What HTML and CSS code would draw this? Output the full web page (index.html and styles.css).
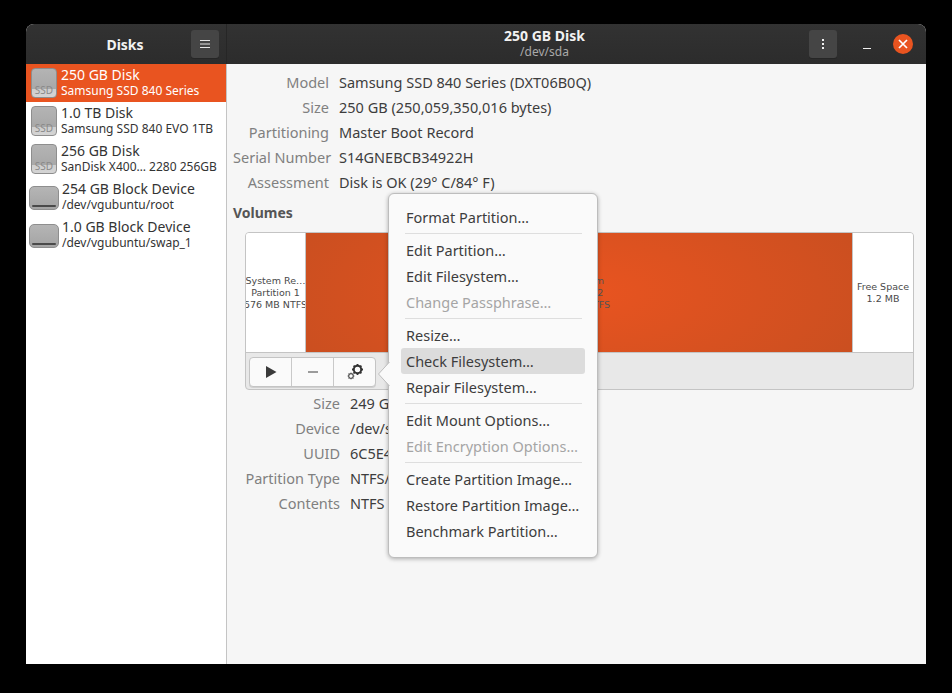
FILE: index.html
```html
<!DOCTYPE html>
<html lang="en">
<head>
<meta charset="utf-8">
<title>Disks</title>
<link rel="stylesheet" href="styles.css">
</head>
<body>
<div class="window">
  <header class="titlebar">
    <div class="title-left">
      <span class="app-title">Disks</span>
      <button class="hb-btn hamburger" aria-label="Menu">
        <svg width="12" height="12" viewBox="0 0 12 12"><path d="M1 2.5h10M1 6h10M1 9.5h10" stroke="#e6e6e6" stroke-width="1" fill="none"/></svg>
      </button>
    </div>
    <div class="title-right">
      <div class="title-center">
        <div class="title-main">250 GB Disk</div>
        <div class="title-sub">/dev/sda</div>
      </div>
      <button class="hb-btn dots" aria-label="Drive options">
        <svg width="4" height="12" viewBox="0 0 4 12"><path d="M1 1h2v2H1zM1 5h2v2H1zM1 9h2v2H1z" fill="#f0f0f0"/></svg>
      </button>
      <span class="minimize"></span>
      <span class="close">
        <svg width="10" height="10" viewBox="0 0 10 10"><path d="M1 1l8 8M9 1l-8 8" stroke="#fff" stroke-width="1.7" fill="none"/></svg>
      </span>
    </div>
  </header>
  <div class="content">
    <aside class="sidebar">
      <div class="drive selected">
        <div class="ssd-icon"><span>SSD</span></div>
        <div class="drive-text"><div class="drive-name">250 GB Disk</div><div class="drive-sub">Samsung SSD 840 Series</div></div>
      </div>
      <div class="drive">
        <div class="ssd-icon"><span>SSD</span></div>
        <div class="drive-text"><div class="drive-name">1.0 TB Disk</div><div class="drive-sub">Samsung SSD 840 EVO 1TB</div></div>
      </div>
      <div class="drive">
        <div class="ssd-icon"><span>SSD</span></div>
        <div class="drive-text"><div class="drive-name">256 GB Disk</div><div class="drive-sub">SanDisk X400… 2280 256GB</div></div>
      </div>
      <div class="drive">
        <div class="block-icon"><i></i></div>
        <div class="drive-text"><div class="drive-name">254 GB Block Device</div><div class="drive-sub">/dev/vgubuntu/root</div></div>
      </div>
      <div class="drive">
        <div class="block-icon"><i></i></div>
        <div class="drive-text"><div class="drive-name">1.0 GB Block Device</div><div class="drive-sub">/dev/vgubuntu/swap_1</div></div>
      </div>
    </aside>
    <main class="pane">
      <dl class="props top-props">
        <dt>Model</dt><dd>Samsung SSD 840 Series (DXT06B0Q)</dd>
        <dt>Size</dt><dd>250 GB (250,059,350,016 bytes)</dd>
        <dt>Partitioning</dt><dd>Master Boot Record</dd>
        <dt>Serial Number</dt><dd>S14GNEBCB34922H</dd>
        <dt>Assessment</dt><dd>Disk is OK (29° C/84° F)</dd>
      </dl>
      <h2 class="volumes-title">Volumes</h2>
      <section class="volumes">
        <div class="bar">
          <div class="part part-first">System Re…<br>Partition 1<br>576 MB NTFS</div>
          <div class="part part-main">Filesystem<br>Partition 2<br>249 GB NTFS</div>
          <div class="part part-free">Free Space<br>1.2 MB</div>
        </div>
        <div class="vol-toolbar">
          <div class="btn-group">
            <button class="tool-btn" aria-label="Mount">
              <svg width="12" height="14" viewBox="0 0 12 14"><path d="M1 1l10.500 6L1 13z" fill="#3a3a3a"/></svg>
            </button>
            <button class="tool-btn" aria-label="Delete">
              <svg width="12" height="2" viewBox="0 0 12 2"><path d="M1 1h10" stroke="#3d3d3d" stroke-width="1.200"/></svg>
            </button>
            <button class="tool-btn" aria-label="Additional options">
              <svg width="18" height="18" viewBox="0 0 18 18">
                <circle cx="11.500" cy="6.500" r="3.700" fill="none" stroke="#333" stroke-width="2"/>
                <path d="M11.500 1v2M11.500 10v2M6 6.500h2M15 6.500h2M7.600 2.600l1.400 1.400M14 9l1.400 1.400M15.400 2.600L14 4M9 9l-1.400 1.400" stroke="#333" stroke-width="1.800"/>
                <circle cx="5" cy="13" r="2.300" fill="none" stroke="#555" stroke-width="1.200"/>
                <path d="M5 9.600v1.200M5 15.200v1.200M1.600 13h1.200M7.200 13h1.200M2.600 10.600l.8.8M6.600 14.600l.8.8M7.400 10.600l-.8.8M3.400 14.600l-.8.8" stroke="#555" stroke-width="1"/>
              </svg>
            </button>
          </div>
        </div>
      </section>
      <dl class="props bottom-props">
        <dt>Size</dt><dd>249 GB</dd>
        <dt>Device</dt><dd>/dev/sda2</dd>
        <dt>UUID</dt><dd>6C5E4A1B5E4A0C8D</dd>
        <dt>Partition Type</dt><dd>NTFS/exFAT/HPFS (0x07)</dd>
        <dt>Contents</dt><dd>NTFS (version 3.1)</dd>
      </dl>
      <div class="popover">
        <svg class="pop-arrow" width="13" height="28" viewBox="0 0 13 28"><path d="M12.500 2L1.500 14l11 12" fill="#fafafa" stroke="#bdbdbd"/></svg>
        <div class="menu-item">Format Partition…</div>
        <div class="sep"></div>
        <div class="menu-item">Edit Partition…</div>
        <div class="menu-item">Edit Filesystem…</div>
        <div class="menu-item disabled">Change Passphrase…</div>
        <div class="sep"></div>
        <div class="menu-item">Resize…</div>
        <div class="menu-item hover">Check Filesystem…</div>
        <div class="menu-item">Repair Filesystem…</div>
        <div class="sep"></div>
        <div class="menu-item">Edit Mount Options…</div>
        <div class="menu-item disabled">Edit Encryption Options…</div>
        <div class="sep"></div>
        <div class="menu-item">Create Partition Image…</div>
        <div class="menu-item">Restore Partition Image…</div>
        <div class="menu-item">Benchmark Partition…</div>
      </div>
    </main>
  </div>
</div>
</body>
</html>
```
FILE: styles.css
```css
* { box-sizing: border-box; }
html, body { margin: 0; height: 100%; }
body {
  background: #000;
  padding: 24px 26px 29px;
  font-family: "Noto Sans", "Open Sans", sans-serif;
  font-size: 14.5px;
  color: #3d3d3d;
}
button { padding: 0; margin: 0; border: 0; font: inherit; }

.window {
  width: 900px;
  height: 640px;
  display: flex;
  flex-direction: column;
  border-radius: 8px 8px 0 0;
  overflow: hidden;
  background: #f6f6f6;
}

.titlebar {
  height: 40px;
  flex: none;
  display: flex;
  background: linear-gradient(#323232, #2c2c2c);
  color: #f2f2f2;
}
.title-left {
  width: 201px;
  flex: none;
  display: flex;
  align-items: center;
  border-right: 1px solid #262626;
  padding-right: 7px;
}
.app-title {
  flex: 1;
  text-align: center;
  font-weight: 700;
  font-size: 14px;
  padding-left: 33px;
}
.hb-btn {
  width: 28px;
  height: 28px;
  border-radius: 3px;
  background: #454545;
  box-shadow: 0 1px 0 #262626;
  display: flex;
  align-items: center;
  justify-content: center;
}
.title-right {
  flex: 1;
  display: flex;
  align-items: center;
  padding-right: 13px;
}
.title-center {
  flex: 1;
  text-align: center;
  line-height: 16px;
  padding-left: 53px;
}
.title-main { font-weight: 700; font-size: 14px; }
.title-sub { font-size: 12px; color: #a9a9a9; }
.dots { margin-right: 16px; }
.minimize {
  width: 8px;
  height: 1px;
  background: #f0f0f0;
  margin: 9px 22px 0 10px;
  flex: none;
}
.close {
  width: 20px;
  height: 20px;
  border-radius: 50%;
  background: #e95420;
  display: flex;
  align-items: center;
  justify-content: center;
  flex: none;
}

.content { flex: 1; display: flex; min-height: 0; }
.sidebar {
  width: 201px;
  flex: none;
  background: #fff;
  border-right: 1px solid #c4c4c4;
}
.drive {
  height: 38px;
  display: flex;
  align-items: center;
  color: #333;
}
.drive.selected { background: #e95420; color: #fff; }
.drive-text { line-height: 16px; white-space: nowrap; margin-top: -1px; }
.drive-name { font-size: 14px; }
.drive-sub { font-size: 12px; }

.ssd-icon {
  width: 26px;
  height: 30px;
  margin: 0 4px 0 5px;
  border-radius: 4px;
  border: 1px solid #8e8e8e;
  background: linear-gradient(#b4b4b4, #a8a8a8 72%, #cfcfcf 72%, #d4d4d4);
  display: flex;
  align-items: flex-end;
  justify-content: center;
  flex: none;
}
.ssd-icon span {
  font-size: 10px;
  line-height: 13px;
  color: #8a8a8a;
}
.selected .ssd-icon span { color: #8a8a8a; }
.block-icon {
  width: 30px;
  height: 24px;
  margin: 2px 3px 0 3px;
  border-radius: 5px;
  background: linear-gradient(#b5b5b5, #a4a4a4);
  border: 1px solid #8e8e8e;
  display: flex;
  align-items: flex-end;
  justify-content: center;
  padding-bottom: 2px;
  flex: none;
}
.block-icon i {
  display: block;
  width: 24px;
  height: 2px;
  background: #4a4a4a;
  border-radius: 1px;
}

.pane {
  flex: 1;
  position: relative;
  padding: 6px 12px 0 6px;
}
.props {
  margin: 0;
  display: grid;
  grid-auto-rows: 25px;
  column-gap: 10px;
  line-height: 25px;
  white-space: nowrap;
}
.props dt { text-align: right; color: #808080; }
.props dd { margin: 0; }
.top-props { grid-template-columns: 96px 1fr; }
.bottom-props { grid-template-columns: 95px 1fr; margin-left: 12px; margin-top: 1px; }
.volumes-title {
  margin: 8px 0 9px;
  font-size: 14px;
  line-height: 20px;
  font-weight: 700;
  color: #555;
}
.volumes {
  margin-left: 12px;
  height: 158px;
  border: 1px solid #c4c4c4;
  border-radius: 4px;
  background: #e8e8e8;
  overflow: hidden;
  margin-bottom: 0;
}
.bar {
  height: 120px;
  display: flex;
  border-bottom: 1px solid #c4c4c4;
  font-family: "DejaVu Sans", sans-serif;
  font-size: 9.500px;
  line-height: 12px;
  color: #4a4a4a;
  text-align: center;
}
.part {
  display: flex;
  align-items: center;
  justify-content: center;
  overflow: hidden;
  white-space: nowrap;
  background: #fff;
}
.part-first { width: 60px; flex: none; border-right: 1px solid #c4c4c4; }
.part-main {
  flex: 1;
  background: radial-gradient(ellipse 300px 130px at 50% 50%, #e95420, #cb4f20);
  border-right: 1px solid #c4c4c4;
  color: #555;
}
.part-free { width: 60px; flex: none; }
.vol-toolbar { padding: 4px 3px; }
.btn-group {
  display: inline-flex;
  height: 30px;
  border: 1px solid #c4c4c4;
  border-radius: 4px;
  background: #fafafa;
  box-shadow: 0 1px 0 #d0d0d0;
  overflow: hidden;
}
.tool-btn {
  width: 42px;
  background: transparent;
  border-right: 1px solid #c9c9c9;
  display: flex;
  align-items: center;
  justify-content: center;
}
.tool-btn:last-child { border-right: 0; width: 41px; }

.popover {
  position: absolute;
  left: 161px;
  top: 129px;
  width: 210px;
  height: 365px;
  padding: 10px 12px;
  background: #fafafa;
  border: 1px solid #bdbdbd;
  border-radius: 6px;
  box-shadow: 0 1px 4px rgba(0,0,0,.3);
}
.pop-arrow { position: absolute; left: -12px; top: 166px; }
.menu-item {
  height: 26px;
  line-height: 26px;
  padding-left: 5px;
  border-radius: 3px;
  white-space: nowrap;
  color: #3d3d3d;
}
.menu-item.disabled { color: #a5a5a5; }
.menu-item.hover { background: #dcdcdc; }
.sep {
  height: 1px;
  margin: 3px 3px 3px 4px;
  background: #dedede;
}
```
